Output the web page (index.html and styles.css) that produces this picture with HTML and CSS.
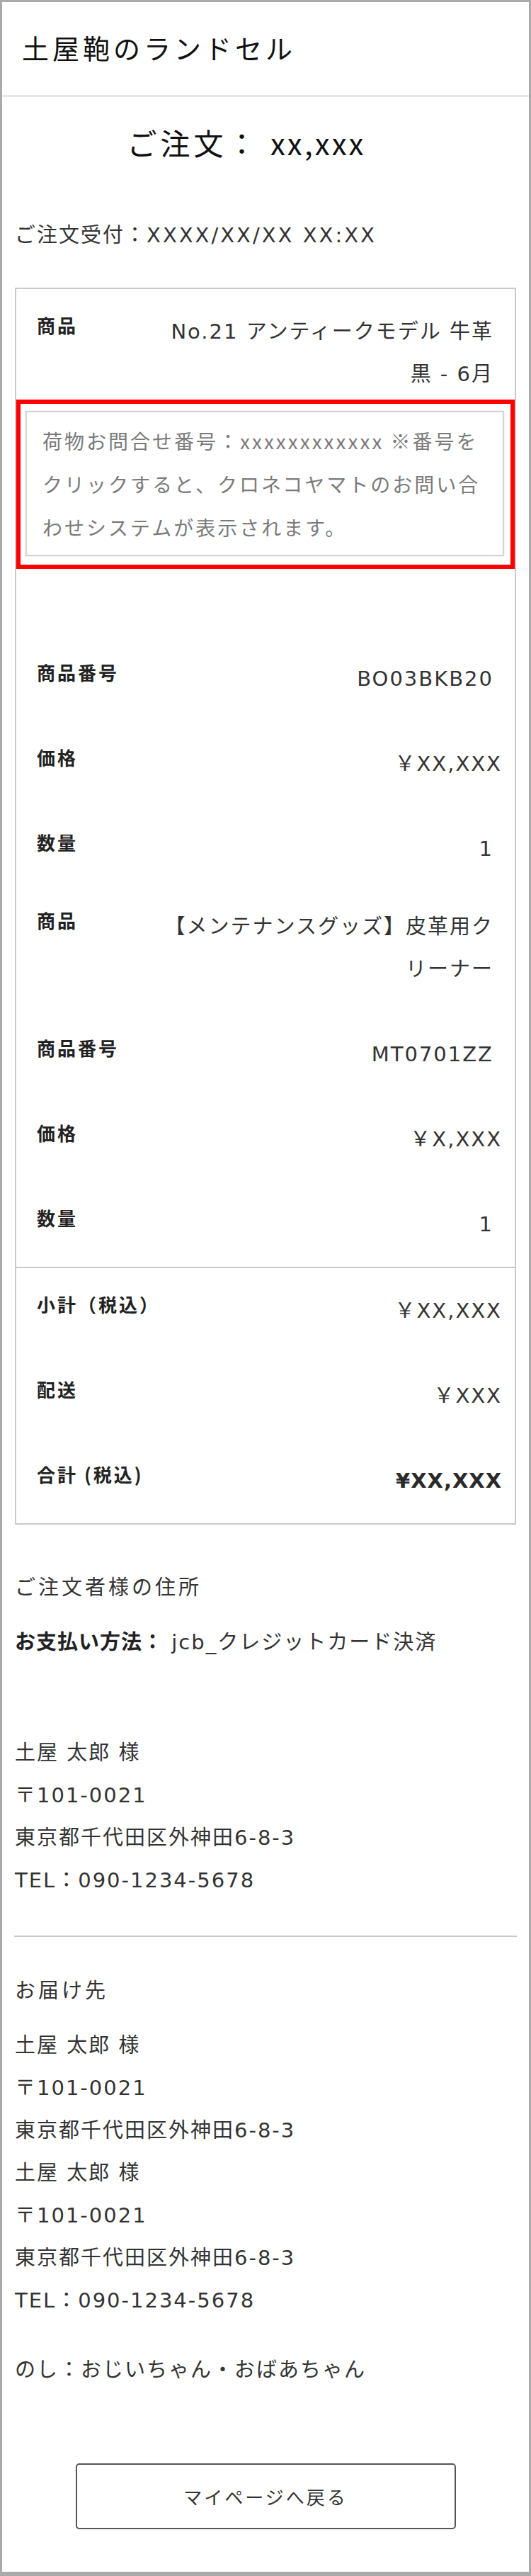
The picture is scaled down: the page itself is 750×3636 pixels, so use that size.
FILE: index.html
```html
<!DOCTYPE html>
<html lang="ja">
<head>
    <meta charset="UTF-8">
    <meta name="viewport" content="width=device-width, initial-scale=1.0">
    <title>ご注文詳細 | 土屋鞄のランドセル</title>
    <link rel="stylesheet" href="styles.css">
</head>
<body>
    <div class="page">
        <header class="site-header">
            <div class="logo">土屋鞄のランドセル</div>
        </header>

        <main class="content">
            <h1 class="order-title">ご注文： <span class="order-no">xx,xxx</span></h1>
            <p class="order-date">ご注文受付：<span class="date-num">XXXX/XX/XX XX:XX</span></p>

            <div class="order-box">
                <div class="items">
                    <div class="row item has-notice">
                        <div class="label">商品</div>
                        <div class="value">No.21 アンティークモデル 牛革<br>黒 - 6月</div>
                    </div>
                    <div class="notice">
                        <div class="notice-inner">荷物お問合せ番号：xxxxxxxxxxxx ※番号を<br>クリックすると、クロネコヤマトのお問い合<br>わせシステムが表示されます。</div>
                    </div>
                    <div class="row">
                        <div class="label">商品番号</div>
                        <div class="value">BO03BKB20</div>
                    </div>
                    <div class="row">
                        <div class="label">価格</div>
                        <div class="value price">￥XX,XXX</div>
                    </div>
                    <div class="row">
                        <div class="label">数量</div>
                        <div class="value">1</div>
                    </div>

                    <div class="row item">
                        <div class="label">商品</div>
                        <div class="value">【メンテナンスグッズ】皮革用ク<br>リーナー</div>
                    </div>
                    <div class="row">
                        <div class="label">商品番号</div>
                        <div class="value">MT0701ZZ</div>
                    </div>
                    <div class="row">
                        <div class="label">価格</div>
                        <div class="value price">￥X,XXX</div>
                    </div>
                    <div class="row">
                        <div class="label">数量</div>
                        <div class="value">1</div>
                    </div>
                </div>

                <div class="totals">
                    <div class="row">
                        <div class="label">小計（税込）</div>
                        <div class="value price">￥XX,XXX</div>
                    </div>
                    <div class="row">
                        <div class="label">配送</div>
                        <div class="value price">￥XXX</div>
                    </div>
                    <div class="row">
                        <div class="label">合計 (税込)</div>
                        <div class="value price total">¥XX,XXX</div>
                    </div>
                </div>
            </div>

            <section class="customer">
                <h2 class="section-title">ご注文者様の住所</h2>
                <p class="payment"><strong>お支払い方法：</strong> jcb_クレジットカード決済</p>

                <div class="address first">
                    <p>土屋 太郎 様</p>
                    <p>〒101-0021</p>
                    <p>東京都千代田区外神田6-8-3</p>
                    <p>TEL：090-1234-5678</p>
                </div>
            </section>

            <hr class="divider">

            <section class="delivery">
                <h2 class="section-title">お届け先</h2>
                <div class="address">
                    <p>土屋 太郎 様</p>
                    <p>〒101-0021</p>
                    <p>東京都千代田区外神田6-8-3</p>
                    <p>土屋 太郎 様</p>
                    <p>〒101-0021</p>
                    <p>東京都千代田区外神田6-8-3</p>
                    <p>TEL：090-1234-5678</p>
                </div>
                <p class="noshi">のし：おじいちゃん・おばあちゃん</p>
            </section>

            <div class="back">
                <a href="#" class="back-btn">マイページへ戻る</a>
            </div>
        </main>
    </div>
</body>
</html>
```

FILE: styles.css
```css
body {
    margin: 0;
    background: #fff;
    color: #333;
    font-family: "DejaVu Sans", "Noto Sans CJK JP", sans-serif;
    font-size: 29px;
    letter-spacing: 2px;
}
p, h1, h2 {
    margin: 0;
}
.page {
    min-height: 3636px;
    box-sizing: border-box;
    border: 3px solid #aaa;
    border-bottom-width: 6px;
}

/* header */
.site-header {
    height: 134px;
    display: flex;
    align-items: center;
    padding: 0 0 4px 28px;
    box-sizing: border-box;
    border-bottom: 3px solid #e6e6e6;
}
.logo {
    font-family: "Noto Sans CJK JP", sans-serif;
    font-size: 38px;
    letter-spacing: 5px;
    color: #111;
}

.content {
    padding: 0 18px;
}

.order-title {
    margin-top: 34px;
    padding-right: 54px;
    font-family: "Noto Sans CJK JP", sans-serif;
    font-size: 42px;
    font-weight: normal;
    line-height: 60px;
    letter-spacing: 5px;
    text-align: center;
    color: #111;
}
.order-no {
    letter-spacing: 3px;
}
.order-date {
    margin-top: 71px;
    line-height: 60px;
}
.date-num {
    letter-spacing: 3px;
}

/* order table */
.order-box {
    margin-top: 44px;
    border: 2px solid #c9c9c9;
}
.items {
    padding-top: 10px;
}
.row {
    display: flex;
    justify-content: space-between;
    align-items: flex-start;
    padding: 30px 30px 30px 29px;
}
.row.item {
    padding-top: 20px;
}
.row.has-notice {
    padding-bottom: 6px;
}
.label {
    flex-shrink: 0;
    font-family: "Noto Sans CJK JP", sans-serif;
    font-size: 26px;
    font-weight: bold;
    line-height: 42px;
    letter-spacing: 3px;
    color: #222;
}
.value {
    text-align: right;
    line-height: 60px;
}
.price {
    margin-right: -12px;
}
.price.total {
    font-weight: bold;
    letter-spacing: 1px;
    color: #2a2a2a;
}
.totals {
    border-top: 2px solid #c9c9c9;
}

.notice {
    border: 6px solid #f00;
    padding: 10px 9px 12px 7px;
    margin-bottom: 95px;
}
.notice-inner {
    border: 2px solid #d4d4d4;
    box-shadow: 0 0 2px rgba(0,0,0,0.15);
    padding: 10px 8px 8px 22px;
    font-family: "Noto Sans CJK JP", sans-serif;
    font-size: 28px;
    line-height: 61px;
    letter-spacing: 3px;
    color: #7a7a7a;
}

/* addresses */
.section-title {
    margin-top: 59px;
    font-size: 29px;
    font-weight: normal;
    line-height: 60px;
    letter-spacing: 4px;
}
.payment {
    margin-top: 14px;
    line-height: 60px;
}
.payment strong {
    font-family: "Noto Sans CJK JP", sans-serif;
    letter-spacing: 1px;
    color: #222;
}
.address {
    margin-top: 17px;
    line-height: 60px;
}
.address.first {
    margin-top: 96px;
}
.divider {
    margin: 48px -1px 0;
    border: none;
    border-top: 2px solid #c9c9c9;
}
.delivery .section-title {
    margin-top: 46px;
}
.noshi {
    margin-top: 38px;
    line-height: 60px;
}

.back {
    margin-top: 102px;
    display: flex;
    justify-content: center;
}
.back-btn {
    width: 537px;
    height: 93px;
    box-sizing: border-box;
    display: flex;
    align-items: center;
    justify-content: center;
    border: 2px solid #555;
    border-radius: 5px;
    font-family: "Noto Sans CJK JP", sans-serif;
    font-size: 26px;
    letter-spacing: 3px;
    color: #333;
    text-decoration: none;
}
```
